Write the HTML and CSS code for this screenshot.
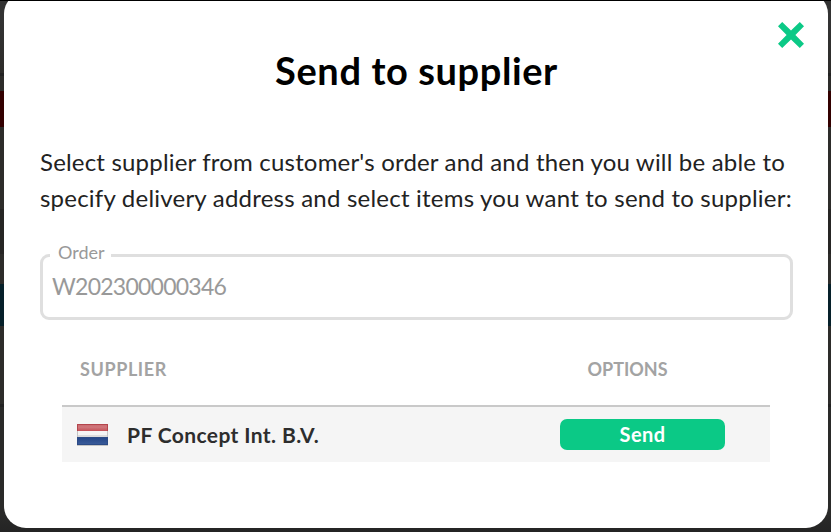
FILE: index.html
```html
<!DOCTYPE html>
<html lang="en">
<head>
<meta charset="utf-8">
<title>Send to supplier</title>
<link rel="stylesheet" href="styles.css">
</head>
<body>
<main class="modal">
  <button class="close" aria-label="Close"><svg viewBox="0 0 26 26"><path d="M4.2 0 13 8.6 21.8 0 26 4.2 17.4 13 26 21.8 21.8 26 13 17.4 4.2 26 0 21.8 8.6 13 0 4.2Z"/></svg></button>
  <h1 class="title">Send to supplier</h1>
  <p class="intro"><span class="line-a">Select supplier from customer's order and and then you will be able to</span><br><span class="line-b">specify delivery address and select items you want to send to supplier:</span></p>
  <div class="field">
    <span class="label">Order</span>
    <span class="value">W202300000346</span>
  </div>
  <section class="table">
    <div class="head"><span class="col-supplier">SUPPLIER</span><span class="col-options">OPTIONS</span></div>
    <div class="row">
      <svg class="flag" viewBox="0 0 31 22">
        <defs><linearGradient id="red" x2="0" y2="1"><stop stop-color="#c7676c"/><stop offset=".45" stop-color="#d0767b"/><stop offset="1" stop-color="#c45057"/></linearGradient><linearGradient id="blue" x2="0" y2="1"><stop stop-color="#254788"/><stop offset="1" stop-color="#3c5d9b"/></linearGradient></defs>
        <path fill="#f4f4f4" d="M0 0h31v21H0z"/>
        <path fill="url(#red)" d="M0 0h31v7H0z"/>
        <path fill="url(#blue)" d="M0 14h31v7H0z"/>
        <path fill="#b4454c" d="M0 0h31v1H0zM0 1h1v6H0zM30 1h1v6h-1z"/>
        <path fill="#c5c5c5" d="M0 7h1v6H0zM30 7h1v6h-1zM0 21h31v1H0z"/>
        <path fill="#dcdcdc" d="M1 11h29v2H1z"/>
        <path fill="#2c4b86" d="M0 13h31v1H0zM0 14h1v7H0zM30 14h1v7h-1zM1 20h29v1H1z"/>
      </svg>
      <span class="name">PF Concept Int. B.V.</span>
      <button class="send">Send</button>
    </div>
  </section>
</main>
</body>
</html>
```
FILE: styles.css
```css
* { box-sizing: border-box; }
body {
  margin: 0;
  height: 532px;
  overflow: hidden;
  border-top: 1px solid #000;
  font-family: Lato, "Open Sans", sans-serif;
  color: #222;
  background: linear-gradient(#333 0 20px, #2d2c2a 73px, #222 73px 76px, #2d2c2a 76px 91px, #300 91px 127px, #2d2c2a 127px 209px, #262524 209px 254px, #2d2c2a 254px 284px, #06202a 284px 326px, #2d2c2a 326px 404px, #222 404px 407px, #2a2a29 407px 515px, #242424);
}
button { border: 0; padding: 0; font-family: inherit; }
.modal {
  position: relative;
  margin: -9px 3px 0 4px;
  height: 536px;
  padding: 45px 35px 0 36px;
  border-radius: 22px;
  background: #fff;
}
.close {
  position: absolute;
  top: 30px;
  right: 24px;
  width: 26px;
  height: 26px;
  background: none;
}
.close svg { display: block; fill: #0bc986; }
.title {
  margin: 0;
  height: 66px;
  line-height: 66px;
  text-align: center;
  font-size: 38px;
  font-weight: 700;
  letter-spacing: .6px;
  color: #000;
}
.intro {
  margin: 41px 0 0;
  font-size: 24px;
  line-height: 36px;
  white-space: nowrap;
}
.line-a { letter-spacing: .185px; }
.line-b { letter-spacing: .22px; }
.field {
  position: relative;
  margin-top: 38px;
  height: 66px;
  padding: 14px 10px 0 9px;
  border: 3px solid #dfdfdf;
  border-radius: 9px;
  color: #999;
}
.label {
  position: absolute;
  left: 7px;
  top: -16px;
  width: 61px;
  padding-left: 8px;
  background: #fff;
  font-size: 18px;
  line-height: 22px;
}
.value { display: block; font-size: 23px; line-height: 30px; letter-spacing: -.75px; }
.table { margin: 30px 23px 0 22px; }
.head {
  display: flex;
  height: 57px;
  padding: 8px 0 0 18px;
  border-bottom: 2px solid #c9c9c9;
  font-size: 18px;
  line-height: 23px;
  font-weight: 700;
  color: #a3a3a3;
}
.col-supplier { width: 507.5px; letter-spacing: .6px; }
.row {
  display: flex;
  align-items: center;
  height: 55px;
  padding: 0 45px 0 15px;
  background: #f5f5f5;
}
.flag { width: 31px; height: 22px; }
.name { margin: 1px auto 0 19px; font-size: 21px; line-height: 28px; letter-spacing: .4px; font-weight: 700; color: #2d2d2d; }
.send {
  width: 165px;
  height: 31px;
  margin-top: -1px;
  border-radius: 7px;
  background: #0bc986;
  color: #fff;
  font-size: 20px;
  line-height: 30px;
  letter-spacing: .4px;
  font-weight: 700;
}
```
